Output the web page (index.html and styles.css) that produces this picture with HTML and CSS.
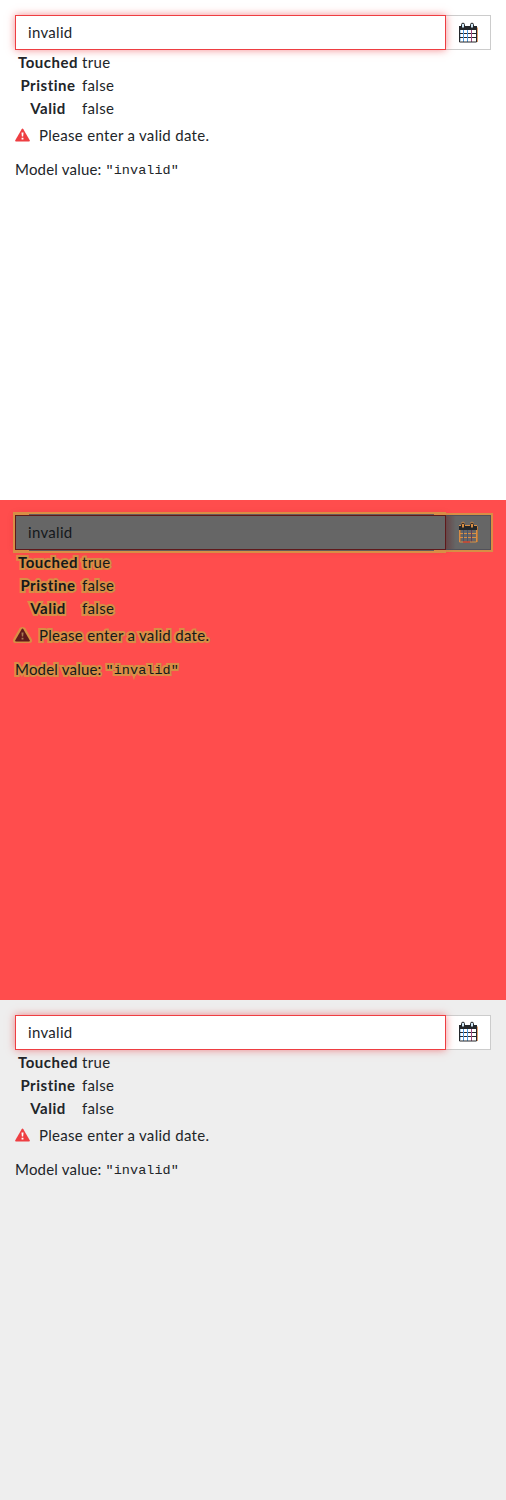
FILE: index.html
```html
<!DOCTYPE html>
<html lang="en">
<head>
<meta charset="utf-8">
<title>Datepicker validation</title>
<link rel="stylesheet" href="styles.css">
</head>
<body>
<svg class="defs" aria-hidden="true">
  <symbol id="calendar" viewBox="0 0 20 22">
    <path class="cal-fill" d="M1 6h18v14H1z"/>
    <path class="cal-edge" d="M2.500 8V19"/>
    <path class="cal-warm" d="M19.500 5.500V20"/>
    <path class="cal-line" d="M1 11.500h18M1 15.500h18"/>
    <path class="cal-blue" d="M5.500 7.500V20M9.500 7.500V20"/>
    <path class="cal-red" d="M13.500 7.500V20"/>
    <path class="cal-frame" d="M1.500 7v13h17V7"/>
    <path class="cal-head" d="M1 4h18v4H1z"/>
    <path class="cal-gap" d="M5 2v3.500M14 2v3.500"/>
    <path class="cal-ring" d="M3.500 5.500V2.500q0-1.300 1.500-1.300t1.500 1.300v3M12.500 5.500V2.500q0-1.300 1.500-1.300t1.500 1.300v3"/>
    <path class="cal-base" d="M5 20h7"/>
  </symbol>
  <symbol id="warning" viewBox="0 0 16 14">
    <path d="M7.100.8q.9-1.400 1.800 0l6.800 11.700q.6 1.400-.8 1.500H1.100Q-.3 13.900.3 12.500z"/>
    <path class="mark" d="M6.900 4.200h2.200l-.4 4.500H7.300zM7 9.800h2v2H7z"/>
  </symbol>
</svg>
<section class="panel">
  <div class="group"><div class="field"><span class="input-text">invalid</span></div><div class="toggle"><svg class="calendar"><use href="#calendar"/></svg></div></div>
  <table class="states">
    <tr><th>Touched</th><td>true</td></tr>
    <tr><th>Pristine</th><td>false</td></tr>
    <tr><th>Valid</th><td>false</td></tr>
  </table>
  <div class="error"><svg class="warning"><use href="#warning"/></svg><span class="message">Please enter a valid date.</span></div>
  <div class="model"><span class="label">Model value:</span><code>"invalid"</code></div>
</section>
<section class="panel diff">
  <div class="group"><div class="field"><span class="input-text">invalid</span></div><div class="toggle"><svg class="calendar"><use href="#calendar"/></svg></div></div>
  <table class="states">
    <tr><th>Touched</th><td>true</td></tr>
    <tr><th>Pristine</th><td>false</td></tr>
    <tr><th>Valid</th><td>false</td></tr>
  </table>
  <div class="error"><svg class="warning"><use href="#warning"/></svg><span class="message">Please enter a valid date.</span></div>
  <div class="model"><span class="label">Model value:</span><code>"invalid"</code></div>
</section>
<section class="panel gray">
  <div class="group"><div class="field"><span class="input-text">invalid</span></div><div class="toggle"><svg class="calendar"><use href="#calendar"/></svg></div></div>
  <table class="states">
    <tr><th>Touched</th><td>true</td></tr>
    <tr><th>Pristine</th><td>false</td></tr>
    <tr><th>Valid</th><td>false</td></tr>
  </table>
  <div class="error"><svg class="warning"><use href="#warning"/></svg><span class="message">Please enter a valid date.</span></div>
  <div class="model"><span class="label">Model value:</span><code>"invalid"</code></div>
</section>
</body>
</html>
```
FILE: styles.css
```css
* { box-sizing: border-box; }
body { margin: 0; font: 15px/23px Lato, sans-serif; color: #212529; }
.defs { position: absolute; width: 0; height: 0; }
.panel { height: 500px; padding: 15px; background: #fff; overflow: hidden; }
.gray { background: #eee; }
.group { display: flex; width: 476px; height: 35px; }
.field { position: relative; z-index: 1; width: 431px; padding: 5px 12px; border: 1px solid #ee3e42; background: #fff; box-shadow: 0 0 8px rgba(238,62,66,.6); }
.input-text { letter-spacing: .3px; }
.toggle { width: 45px; border: 1px solid #ccc; border-left: 0; background: #fff; padding: 6px 0 0 12px; }
.gray .toggle { padding-top: 5px; }

.calendar { display: block; width: 20px; height: 22px; }
.cal-ring, .cal-frame, .cal-line, .cal-blue, .cal-red, .cal-warm, .cal-edge, .cal-gap, .cal-base { fill: none; stroke-width: 1; }
.cal-fill { fill: var(--paper, #fff); }
.cal-head { fill: #24272b; }
.cal-ring { stroke: #24272b; }
.cal-line, .cal-frame { stroke: var(--line, #24272b); }
.cal-blue { stroke: var(--blue, #4b9be0); }
.cal-red { stroke: var(--red, #a84c82); }
.cal-warm { stroke: var(--warm, #e0a070); }
.cal-edge { stroke: var(--edge, #a8d4f2); }
.cal-gap { stroke: var(--gap, #cfe8f7); stroke-width: 2; }
.cal-base { stroke: var(--base, none); }

.states { border-collapse: collapse; margin-top: 1px; line-height: 23px; }
.states th { width: 66px; padding: 0; text-align: center; font-weight: 700; letter-spacing: .52px; font-variant-ligatures: none; }
.states td { padding: 0 0 0 1px; letter-spacing: .35px; }
.error { display: flex; height: 23px; margin-top: 4px; }
.warning { width: 15px; height: 14px; margin: 4px 9px 0 0; fill: #ee3e42; overflow: visible; }
.mark { fill: var(--mark, #fff); }
.message { letter-spacing: .3px; }
.model { display: flex; margin-top: 11px; gap: 4px; }
.label { letter-spacing: .2px; }
code { font: 13.500px/25px "Liberation Mono", monospace; letter-spacing: .05px; }

.diff {
  background: #ff4d4d;
  color: #14181b;
  --mark: #a87952; --paper: #666; --line: #d88e45; --blue: #48536b; --red: #653c55;
  --warm: #b87535; --edge: #a56d3d; --gap: #d88e45; --base: #d32525;
}
.diff .field { background: #666; border-color: #5f191b; box-shadow: 0 0 8px rgba(120,30,30,.2); }
.diff .field::before { content: ""; position: absolute; z-index: -1; inset: -4px auto -4px -3px; width: 431px; border: 3px solid #d88e45; border-left-width: 2px; border-right: 0; }
.diff .field::after { content: ""; position: absolute; inset: -2px 11px -2px 13px; border: solid #675b5b; border-width: 1px 0; }
.diff .toggle { background: linear-gradient(90deg, #664c4e, #666 10px); border-color: #51515a; box-shadow: 0 0 0 2px #d88e45; }
.diff .states, .diff .message, .diff .label, .diff code { -webkit-text-stroke: 4px #d88e45; stroke-linejoin: miter; paint-order: stroke fill; }
.diff .warning { fill: #5f191b; filter: drop-shadow(1px 0 #d88e45) drop-shadow(-1px 0 #d88e45) drop-shadow(0 1px #d88e45) drop-shadow(0 -1px #d88e45) drop-shadow(1px 0 #d88e45) drop-shadow(-1px 0 #d88e45); }
.diff .calendar { filter: drop-shadow(0 -1px #d88e45); }
```
